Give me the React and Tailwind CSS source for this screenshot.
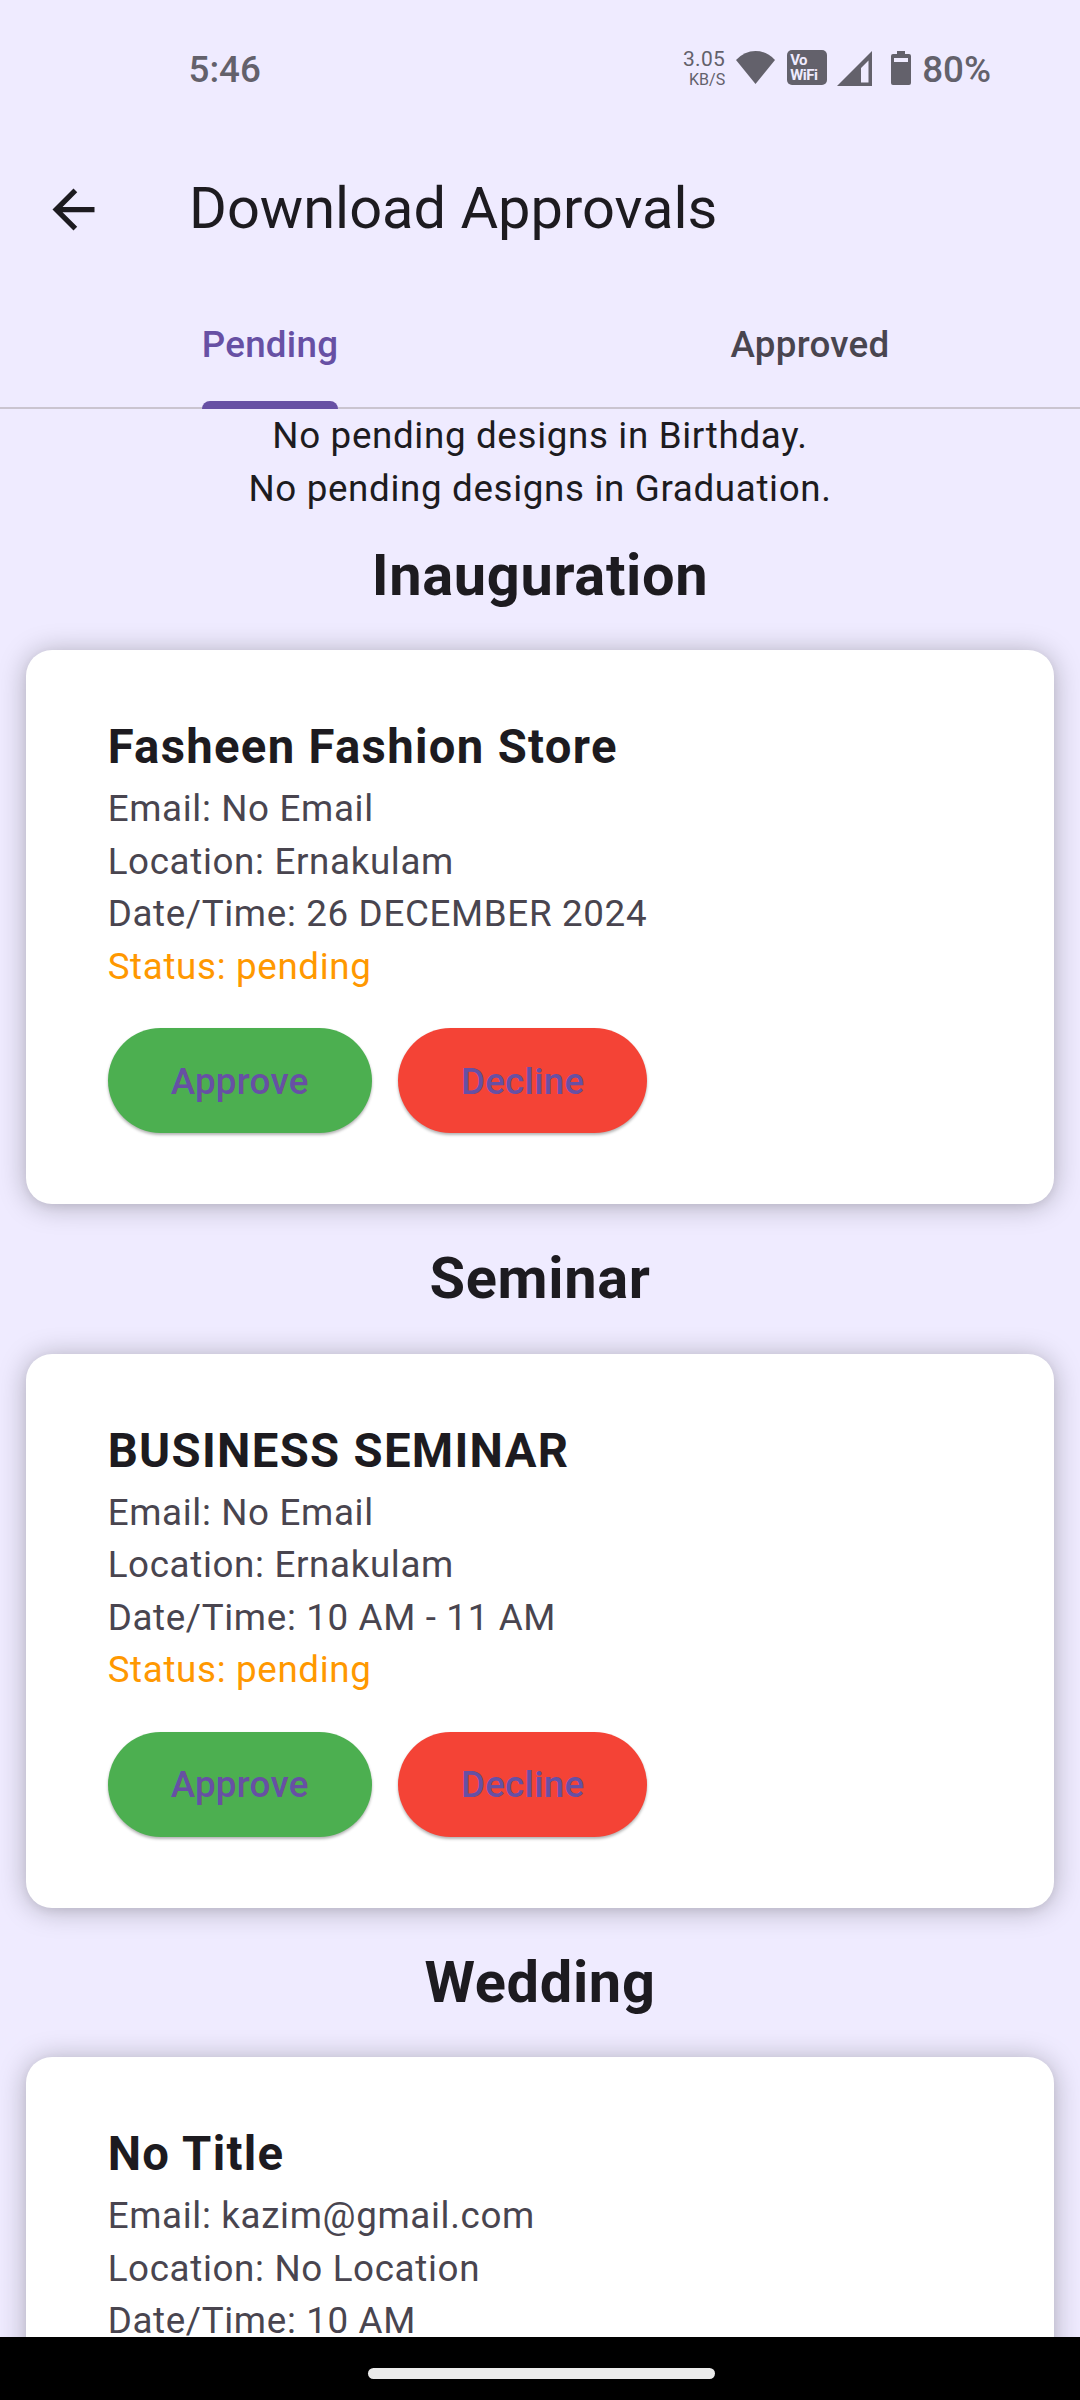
const EVENTS = [
  { section: "Inauguration", title: "Fasheen Fashion Store", email: "No Email", location: "Ernakulam", date: "26 DECEMBER 2024" },
  { section: "Seminar", title: "BUSINESS SEMINAR", email: "No Email", location: "Ernakulam", date: "10 AM - 11 AM" },
  { section: "Wedding", title: "No Title", email: "kazim@gmail.com", location: "No Location", date: "10 AM" },
];

function StatusBar() {
  return (
    <div className="flex h-[137px] shrink-0 items-start pl-[188.500px] pr-[89px] pt-[47px] text-[#63616b]">
      <span className="mt-[1px] text-[36.750px] font-medium leading-[44px]">5:46</span>
      <div className="ml-auto flex items-start">
        <div className="mr-[11px] flex flex-col items-end">
          <span className="text-[21px] leading-[24px] tracking-[0.300px]">3.05</span>
          <span className="text-[16px] leading-[18px]">KB/S</span>
        </div>
        <svg className="mr-[12px] mt-[4px] h-[33px] w-[39px]" viewBox="0 0 39 33" fill="currentColor">
          <path d="M19.5 33 0 9Q8.500 0 19.500 0T39 9Z" />
        </svg>
        <div className="mr-[10px] mt-[3px] flex h-[35px] w-[40px] flex-col justify-center rounded-[5px] bg-[#63616b] pl-[3px] text-[15px] font-bold leading-[15px] tracking-[-0.500px] text-[#efebff]">
          <span>Vo</span>
          <span>WiFi</span>
        </div>
        <svg className="mr-[19px] mt-[4px] h-[35px] w-[35px]" viewBox="0 0 35 35" fill="currentColor">
          <path fillRule="evenodd" d="M35 0V35H0ZM31.500 9.500 24 17V31.500H31.500Z" />
        </svg>
        <svg className="mr-[11px] mt-[4px] h-[34px] w-[20px]" viewBox="0 0 20 34" fill="currentColor">
          <path fillRule="evenodd" d="M6 0H14V3H18Q20 3 20 5V32Q20 34 18 34H2Q0 34 0 32V5Q0 3 2 3H6ZM3 7V11H17V7Z" />
        </svg>
        <span className="mt-[1px] text-[36.750px] font-medium leading-[44px]">80%</span>
      </div>
    </div>
  );
}

function AppBar() {
  return (
    <header className="flex h-[145px] shrink-0 items-center pl-[42px]">
      <svg className="h-[63px] w-[63px]" viewBox="0 0 24 24" fill="#1d1b20">
        <path d="M20 11H7.830l5.590-5.590L12 4l-8 8 8 8 1.410-1.410L7.830 13H20v-2z" />
      </svg>
      <h1 className="mb-[2px] ml-[84px] text-[57.750px] leading-[73.500px]">Download Approvals</h1>
    </header>
  );
}

function Tabs() {
  return (
    <nav className="flex h-[127px] shrink-0 border-b-[2.500px] border-[#cac4d0] text-[36.750px] font-medium leading-[52.500px] tracking-[0.2625px]">
      <div className="flex flex-1 justify-center">
        <div className="relative h-[127px] pt-[37px] text-[#6750a4]">
          Pending
          <div className="absolute inset-x-0 bottom-0 h-[8px] rounded-t-[8px] bg-[#6750a4]" />
        </div>
      </div>
      <div className="flex flex-1 justify-center pt-[37px] text-[#49454f]">Approved</div>
    </nav>
  );
}

function PillButton({ className, children }) {
  return (
    <button className={`h-[105px] rounded-full px-[63px] pt-[2px] text-[36.750px] font-medium tracking-[0.2625px] text-[#6750a4] shadow-[0_2px_3px_rgba(0,0,0,0.3)] ${className}`}>
      {children}
    </button>
  );
}

function EventCard({ event }) {
  return (
    <article className="mx-[26.250px] h-[554px] rounded-[26px] bg-white pl-[81.375px] pt-[62px] shadow-[0_2px_28px_rgba(0,0,0,0.27),0_3px_8px_rgba(0,0,0,0.05)]">
      <h3 className="text-[47.250px] font-bold leading-[71px] tracking-[1.3125px]">{event.title}</h3>
      <div className="leading-[52.500px] text-[#49454f]">
        <p>Email: {event.email}</p>
        <p>Location: {event.location}</p>
        <p>Date/Time: {event.date}</p>
        <p className="text-[#ff9800]">Status: pending</p>
      </div>
      <div className="mt-[35px] flex gap-[26.250px]">
        <PillButton className="bg-[#4caf50]">Approve</PillButton>
        <PillButton className="bg-[#f44336]">Decline</PillButton>
      </div>
    </article>
  );
}

export default function App() {
  return (
    <div className="flex h-[2400px] w-[1080px] flex-col overflow-hidden bg-[#efebff] font-[Roboto,sans-serif] text-[#1d1b20]">
      <StatusBar />
      <AppBar />
      <Tabs />
      <main className="min-h-0 flex-1 overflow-hidden pt-[1px] text-[36.750px] tracking-[0.656px]">
        <div className="-mb-[14.500px] text-center leading-[52.500px]">
          <p>No pending designs in Birthday.</p>
          <p>No pending designs in Graduation.</p>
        </div>
        {EVENTS.map((event) => (
          <section key={event.section}>
            <h2 className="h-[149.500px] pt-[33px] text-center text-[57.750px] font-bold leading-[82px] tracking-[0.656px]">{event.section}</h2>
            <EventCard event={event} />
          </section>
        ))}
      </main>
      <footer className="flex h-[63px] shrink-0 items-start justify-center bg-black pl-[3px] pt-[31px]">
        <div className="h-[11px] w-[347px] rounded-full bg-[#ebebeb]" />
      </footer>
    </div>
  );
}
